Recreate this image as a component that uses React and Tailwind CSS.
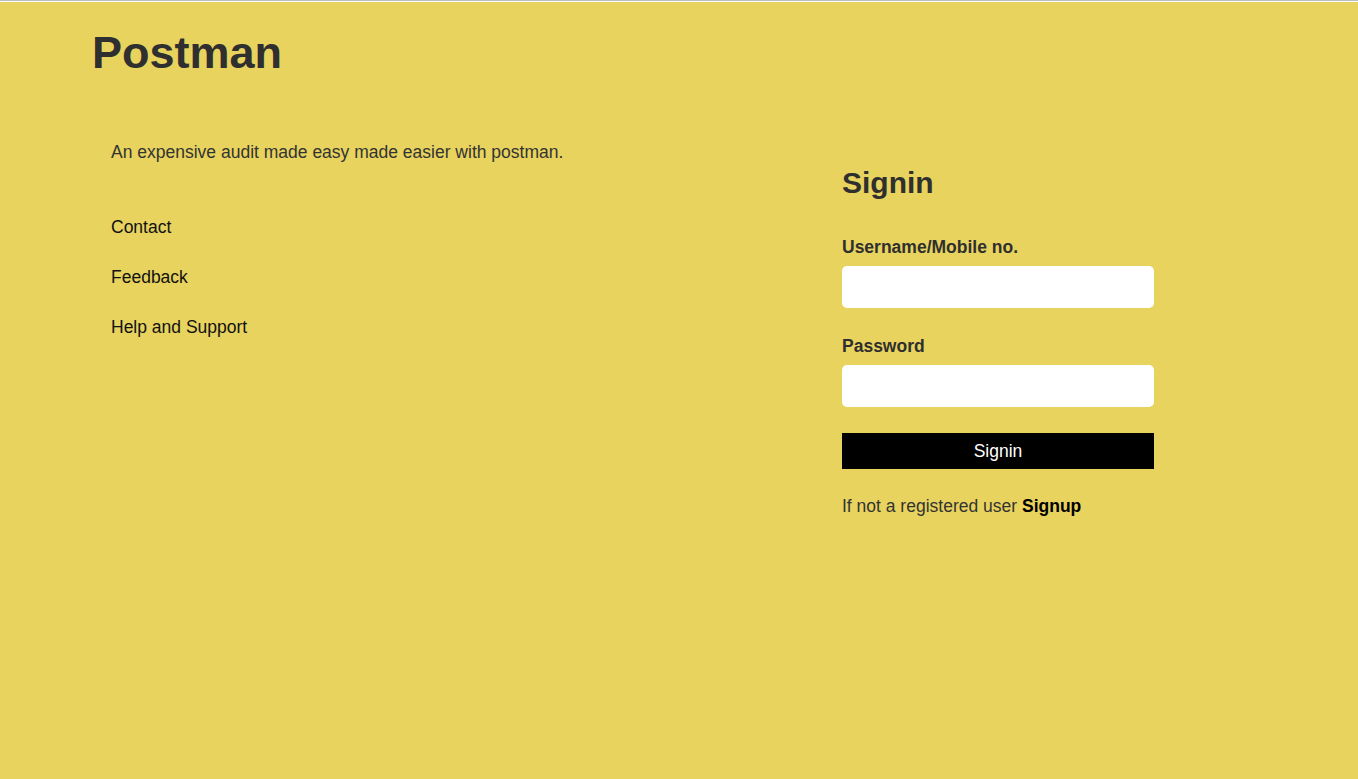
export default function App() {
  return (
    <div className="min-h-screen bg-[#e8d35e] font-['Liberation_Sans',Arial,sans-serif] text-[#333]">
      <div className="h-px bg-[#bdbdbd]" />
      <div className="h-px bg-white" />

      <h1 className="mt-[28px] pl-[92px] text-[45px] leading-none font-bold text-[#2f2f2f]">Postman</h1>

      <div className="flex">
        <div className="w-[842px] pl-[111px] pt-[67px]">
          <p className="text-[17.5px] leading-[20px] text-[#333]">An expensive audit made easy made easier with postman.</p>
          <ul className="mt-[40px] text-[17.5px] text-[#111]">
            <li className="leading-[50px]"><a href="#">Contact</a></li>
            <li className="leading-[50px]"><a href="#">Feedback</a></li>
            <li className="leading-[50px]"><a href="#">Help and Support</a></li>
          </ul>
        </div>

        <div className="w-[312px] pt-[90px]">
          <h2 className="text-[30px] leading-[36px] font-bold text-[#2f2f2f]">Signin</h2>
          <form className="flex flex-col" onSubmit={(e) => e.preventDefault()}>
            <label className="mt-[36px] text-[17.5px] leading-[20px] font-bold text-[#2f2f2f]">Username/Mobile no.</label>
            <input type="text" className="mt-[9px] h-[42px] rounded-[5px] bg-white px-3 text-[16px] outline-none" />
            <label className="mt-[28px] text-[17.5px] leading-[20px] font-bold text-[#2f2f2f]">Password</label>
            <input type="password" className="mt-[9px] h-[42px] rounded-[5px] bg-white px-3 text-[16px] outline-none" />
            <button type="submit" className="mt-[26px] h-[36px] bg-black text-[17.5px] text-white">Signin</button>
          </form>
          <p className="mt-[27px] text-[17.5px] leading-[20px] text-[#333]">
            If not a registered user <a href="#" className="font-bold text-black">Signup</a>
          </p>
        </div>
      </div>
    </div>
  );
}
